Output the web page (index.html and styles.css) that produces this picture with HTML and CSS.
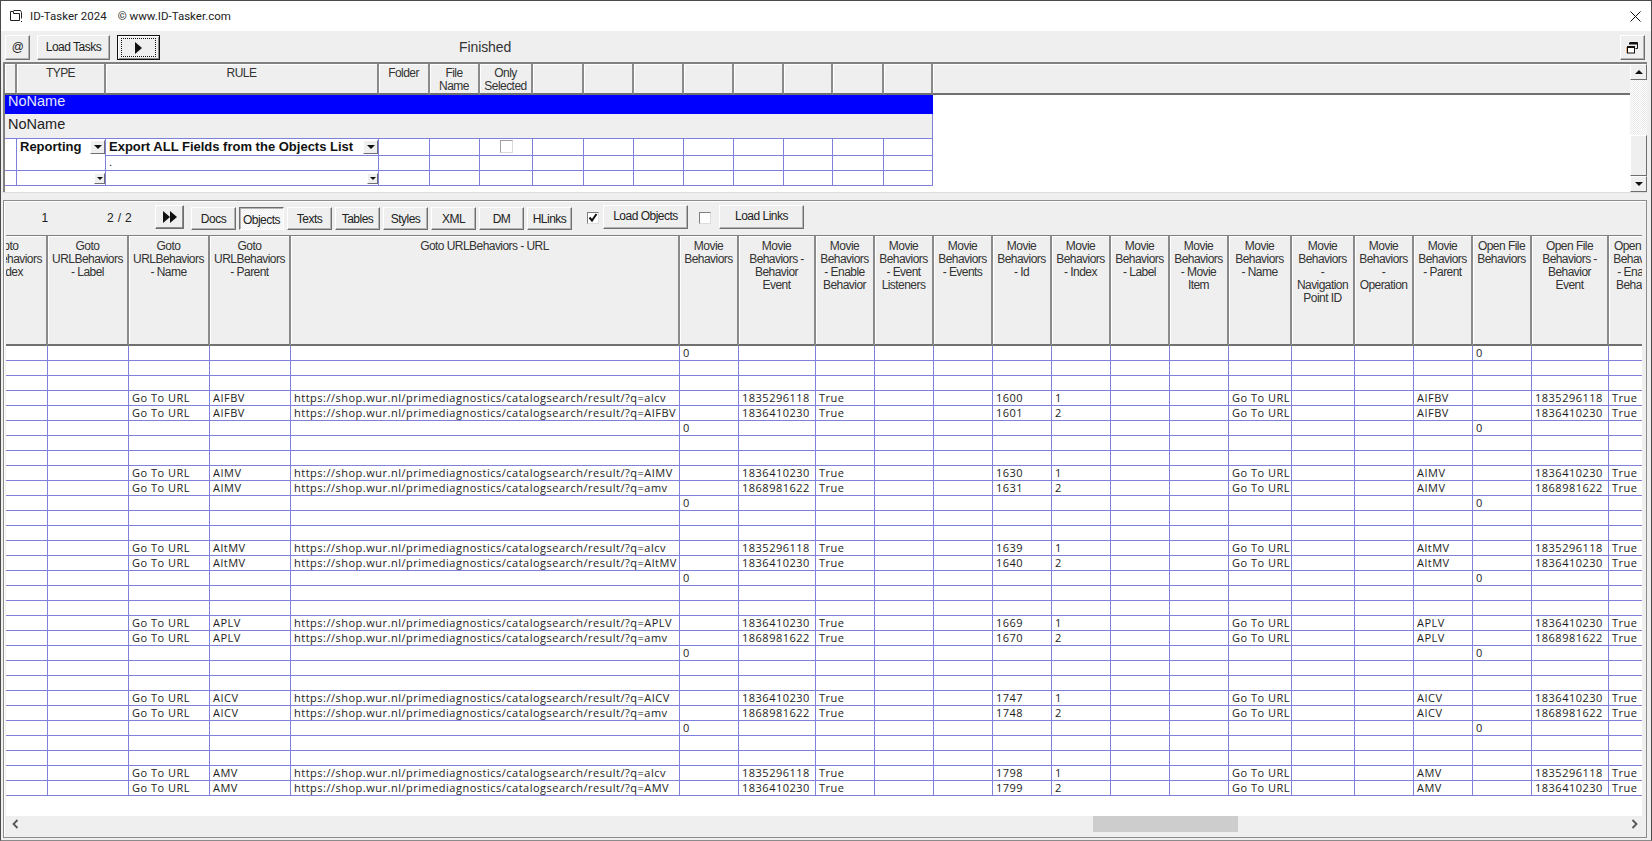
FILE: index.html
```html
<!DOCTYPE html>
<html lang="en">
<head>
<meta charset="utf-8">
<title>ID-Tasker 2024</title>
<link rel="stylesheet" href="styles.css">
</head>
<body>
<div class="app">
  <header class="titlebar">
    <svg class="appicon" width="14" height="14" viewBox="0 0 14 14"><path d="M1.500 2.500h3v2h6v7h-9zM4.500 1.500h7l1 2v6" fill="none" stroke="#222" stroke-width="1"/><path d="M12 12h1v1h-1z" fill="#222"/></svg>
    <span class="title">ID-Tasker 2024</span>
    <span class="title copy">© www.ID-Tasker.com</span>
    <svg class="close" width="11" height="11" viewBox="0 0 11 11"><path d="M.5.5l10 10M10.500.5l-10 10" stroke="#111" stroke-width="1"/></svg>
  </header>

  <div class="toolbar">
    <button class="btn at">@</button>
    <button class="btn loadtasks">Load Tasks</button>
    <button class="btn play"><span class="focus"><span class="tri-right"></span></span></button>
    <span class="status">Finished</span>
    <button class="btn restore">
      <svg width="13" height="12" viewBox="0 0 13 12"><path d="M3.500 .5h8v6h-2" fill="none" stroke="#111"/><path d="M3 1h9v1.500H3z" fill="#111"/><rect x="1.500" y="4.500" width="7" height="6.500" fill="#fff" stroke="#111"/><path d="M1 4h8v2H1z" fill="#111"/><path d="M0 5h1v6H0z" fill="#e8a878"/></svg>
    </button>
  </div>

  <section class="taskpanel">
    <div class="taskgrid">
      <table class="tasks">
        <colgroup><col class="c12"><col class="c89"><col class="c273"><col class="c51"><col class="c50"><col class="c53"><col class="c51"><col class="c50"><col class="c50"><col class="c50"><col class="c50"><col class="c49"><col class="c51"><col class="c49"><col></colgroup>
        <thead>
          <tr><th></th><th>TYPE</th><th>RULE</th><th>Folder</th><th>File<br>Name</th><th>Only<br>Selected</th><th></th><th></th><th></th><th></th><th></th><th></th><th></th><th></th><th class="fill"></th></tr>
        </thead>
        <tbody>
          <tr class="r-blue"><td colspan="14">NoName</td><td class="blank"></td></tr>
          <tr class="r-name"><td colspan="14">NoName</td><td class="blank"></td></tr>
          <tr class="r-main">
            <td rowspan="2"></td>
            <td rowspan="2" class="typecell"><div class="combo"><b>Reporting</b><span class="arrow big"><i class="tri-down"></i></span></div></td>
            <td><div class="combo"><b>Export ALL Fields from the Objects List</b><span class="arrow big"><i class="tri-down"></i></span></div></td>
            <td></td><td></td><td class="chk"><span class="check light"></span></td><td></td><td></td><td></td><td></td><td></td><td></td><td></td><td></td><td class="blank"></td>
          </tr>
          <tr class="r-sub"><td class="dot">.</td><td></td><td></td><td></td><td></td><td></td><td></td><td></td><td></td><td></td><td></td><td></td><td class="blank"></td></tr>
          <tr class="r-sub"><td></td><td><div class="combo end"><span class="arrow"><i class="tri-down small"></i></span></div></td><td><div class="combo end"><span class="arrow"><i class="tri-down small"></i></span></div></td><td></td><td></td><td></td><td></td><td></td><td></td><td></td><td></td><td></td><td></td><td></td><td class="blank"></td></tr>
        </tbody>
      </table>
    </div>
    <div class="vscroll">
      <span class="vbtn"><i class="tri-up"></i></span>
      <span class="vtrack"></span>
      <span class="vthumb"></span>
      <span class="vbtn"><i class="tri-down"></i></span>
    </div>
  </section>

  <section class="objpanel">
    <div class="objbar">
      <span class="count n1">1</span>
      <span class="count n2">2 / 2</span>
      <button class="btn next"><span class="tri-right"></span><span class="tri-right"></span></button>
      <div class="tabs">
        <button class="btn tab">Docs</button>
        <button class="btn tab on">Objects</button>
        <button class="btn tab">Texts</button>
        <button class="btn tab">Tables</button>
        <button class="btn tab">Styles</button>
        <button class="btn tab">XML</button>
        <button class="btn tab">DM</button>
        <button class="btn tab">HLinks</button>
      </div>
      <span class="check first"><svg width="10" height="10" viewBox="0 0 10 10"><path d="M1.500 4.500l2.500 3 4.500-6.500" fill="none" stroke="#111" stroke-width="2"/></svg></span>
      <button class="btn load up">Load Objects</button>
      <span class="check second"></span>
      <button class="btn load up">Load Links</button>
    </div>
    <div class="objgrid">
      <table class="objects">
        <colgroup><col class="c81"><col class="c81"><col class="c81"><col class="c81"><col class="c389"><col class="c59"><col class="c77"><col class="c59"><col class="c59"><col class="c59"><col class="c59"><col class="c59"><col class="c59"><col class="c59"><col class="c63"><col class="c63"><col class="c59"><col class="c59"><col class="c59"><col class="c77"><col class="c59"></colgroup>
        <thead>
          <tr>
            <th>Goto<br>URLBehaviors<br>- Index</th>
            <th>Goto<br>URLBehaviors<br>- Label</th>
            <th>Goto<br>URLBehaviors<br>- Name</th>
            <th>Goto<br>URLBehaviors<br>- Parent</th>
            <th>Goto URLBehaviors - URL</th>
            <th>Movie<br>Behaviors</th>
            <th>Movie<br>Behaviors -<br>Behavior<br>Event</th>
            <th>Movie<br>Behaviors<br>- Enable<br>Behavior</th>
            <th>Movie<br>Behaviors<br>- Event<br>Listeners</th>
            <th>Movie<br>Behaviors<br>- Events</th>
            <th>Movie<br>Behaviors<br>- Id</th>
            <th>Movie<br>Behaviors<br>- Index</th>
            <th>Movie<br>Behaviors<br>- Label</th>
            <th>Movie<br>Behaviors<br>- Movie<br>Item</th>
            <th>Movie<br>Behaviors<br>- Name</th>
            <th>Movie<br>Behaviors<br>-<br>Navigation<br>Point ID</th>
            <th>Movie<br>Behaviors<br>-<br>Operation</th>
            <th>Movie<br>Behaviors<br>- Parent</th>
            <th>Open File<br>Behaviors</th>
            <th>Open File<br>Behaviors -<br>Behavior<br>Event</th>
            <th>Open File<br>Behaviors<br>- Enable<br>Behavior</th>
          </tr>
        </thead>
        <tbody>
          <tr><td></td><td></td><td></td><td></td><td></td><td>0</td><td></td><td></td><td></td><td></td><td></td><td></td><td></td><td></td><td></td><td></td><td></td><td></td><td>0</td><td></td><td></td></tr>
          <tr><td></td><td></td><td></td><td></td><td></td><td></td><td></td><td></td><td></td><td></td><td></td><td></td><td></td><td></td><td></td><td></td><td></td><td></td><td></td><td></td><td></td></tr>
          <tr><td></td><td></td><td></td><td></td><td></td><td></td><td></td><td></td><td></td><td></td><td></td><td></td><td></td><td></td><td></td><td></td><td></td><td></td><td></td><td></td><td></td></tr>
          <tr><td></td><td></td><td>Go To URL</td><td>AIFBV</td><td>https://shop.wur.nl/primediagnostics/catalogsearch/result/?q=alcv</td><td></td><td>1835296118</td><td>True</td><td></td><td></td><td>1600</td><td>1</td><td></td><td></td><td>Go To URL</td><td></td><td></td><td>AIFBV</td><td></td><td>1835296118</td><td>True</td></tr>
          <tr><td></td><td></td><td>Go To URL</td><td>AIFBV</td><td>https://shop.wur.nl/primediagnostics/catalogsearch/result/?q=AIFBV</td><td></td><td>1836410230</td><td>True</td><td></td><td></td><td>1601</td><td>2</td><td></td><td></td><td>Go To URL</td><td></td><td></td><td>AIFBV</td><td></td><td>1836410230</td><td>True</td></tr>
          <tr><td></td><td></td><td></td><td></td><td></td><td>0</td><td></td><td></td><td></td><td></td><td></td><td></td><td></td><td></td><td></td><td></td><td></td><td></td><td>0</td><td></td><td></td></tr>
          <tr><td></td><td></td><td></td><td></td><td></td><td></td><td></td><td></td><td></td><td></td><td></td><td></td><td></td><td></td><td></td><td></td><td></td><td></td><td></td><td></td><td></td></tr>
          <tr><td></td><td></td><td></td><td></td><td></td><td></td><td></td><td></td><td></td><td></td><td></td><td></td><td></td><td></td><td></td><td></td><td></td><td></td><td></td><td></td><td></td></tr>
          <tr><td></td><td></td><td>Go To URL</td><td>AIMV</td><td>https://shop.wur.nl/primediagnostics/catalogsearch/result/?q=AIMV</td><td></td><td>1836410230</td><td>True</td><td></td><td></td><td>1630</td><td>1</td><td></td><td></td><td>Go To URL</td><td></td><td></td><td>AIMV</td><td></td><td>1836410230</td><td>True</td></tr>
          <tr><td></td><td></td><td>Go To URL</td><td>AIMV</td><td>https://shop.wur.nl/primediagnostics/catalogsearch/result/?q=amv</td><td></td><td>1868981622</td><td>True</td><td></td><td></td><td>1631</td><td>2</td><td></td><td></td><td>Go To URL</td><td></td><td></td><td>AIMV</td><td></td><td>1868981622</td><td>True</td></tr>
          <tr><td></td><td></td><td></td><td></td><td></td><td>0</td><td></td><td></td><td></td><td></td><td></td><td></td><td></td><td></td><td></td><td></td><td></td><td></td><td>0</td><td></td><td></td></tr>
          <tr><td></td><td></td><td></td><td></td><td></td><td></td><td></td><td></td><td></td><td></td><td></td><td></td><td></td><td></td><td></td><td></td><td></td><td></td><td></td><td></td><td></td></tr>
          <tr><td></td><td></td><td></td><td></td><td></td><td></td><td></td><td></td><td></td><td></td><td></td><td></td><td></td><td></td><td></td><td></td><td></td><td></td><td></td><td></td><td></td></tr>
          <tr><td></td><td></td><td>Go To URL</td><td>AltMV</td><td>https://shop.wur.nl/primediagnostics/catalogsearch/result/?q=alcv</td><td></td><td>1835296118</td><td>True</td><td></td><td></td><td>1639</td><td>1</td><td></td><td></td><td>Go To URL</td><td></td><td></td><td>AltMV</td><td></td><td>1835296118</td><td>True</td></tr>
          <tr><td></td><td></td><td>Go To URL</td><td>AltMV</td><td>https://shop.wur.nl/primediagnostics/catalogsearch/result/?q=AltMV</td><td></td><td>1836410230</td><td>True</td><td></td><td></td><td>1640</td><td>2</td><td></td><td></td><td>Go To URL</td><td></td><td></td><td>AltMV</td><td></td><td>1836410230</td><td>True</td></tr>
          <tr><td></td><td></td><td></td><td></td><td></td><td>0</td><td></td><td></td><td></td><td></td><td></td><td></td><td></td><td></td><td></td><td></td><td></td><td></td><td>0</td><td></td><td></td></tr>
          <tr><td></td><td></td><td></td><td></td><td></td><td></td><td></td><td></td><td></td><td></td><td></td><td></td><td></td><td></td><td></td><td></td><td></td><td></td><td></td><td></td><td></td></tr>
          <tr><td></td><td></td><td></td><td></td><td></td><td></td><td></td><td></td><td></td><td></td><td></td><td></td><td></td><td></td><td></td><td></td><td></td><td></td><td></td><td></td><td></td></tr>
          <tr><td></td><td></td><td>Go To URL</td><td>APLV</td><td>https://shop.wur.nl/primediagnostics/catalogsearch/result/?q=APLV</td><td></td><td>1836410230</td><td>True</td><td></td><td></td><td>1669</td><td>1</td><td></td><td></td><td>Go To URL</td><td></td><td></td><td>APLV</td><td></td><td>1836410230</td><td>True</td></tr>
          <tr><td></td><td></td><td>Go To URL</td><td>APLV</td><td>https://shop.wur.nl/primediagnostics/catalogsearch/result/?q=amv</td><td></td><td>1868981622</td><td>True</td><td></td><td></td><td>1670</td><td>2</td><td></td><td></td><td>Go To URL</td><td></td><td></td><td>APLV</td><td></td><td>1868981622</td><td>True</td></tr>
          <tr><td></td><td></td><td></td><td></td><td></td><td>0</td><td></td><td></td><td></td><td></td><td></td><td></td><td></td><td></td><td></td><td></td><td></td><td></td><td>0</td><td></td><td></td></tr>
          <tr><td></td><td></td><td></td><td></td><td></td><td></td><td></td><td></td><td></td><td></td><td></td><td></td><td></td><td></td><td></td><td></td><td></td><td></td><td></td><td></td><td></td></tr>
          <tr><td></td><td></td><td></td><td></td><td></td><td></td><td></td><td></td><td></td><td></td><td></td><td></td><td></td><td></td><td></td><td></td><td></td><td></td><td></td><td></td><td></td></tr>
          <tr><td></td><td></td><td>Go To URL</td><td>AICV</td><td>https://shop.wur.nl/primediagnostics/catalogsearch/result/?q=AICV</td><td></td><td>1836410230</td><td>True</td><td></td><td></td><td>1747</td><td>1</td><td></td><td></td><td>Go To URL</td><td></td><td></td><td>AICV</td><td></td><td>1836410230</td><td>True</td></tr>
          <tr><td></td><td></td><td>Go To URL</td><td>AICV</td><td>https://shop.wur.nl/primediagnostics/catalogsearch/result/?q=amv</td><td></td><td>1868981622</td><td>True</td><td></td><td></td><td>1748</td><td>2</td><td></td><td></td><td>Go To URL</td><td></td><td></td><td>AICV</td><td></td><td>1868981622</td><td>True</td></tr>
          <tr><td></td><td></td><td></td><td></td><td></td><td>0</td><td></td><td></td><td></td><td></td><td></td><td></td><td></td><td></td><td></td><td></td><td></td><td></td><td>0</td><td></td><td></td></tr>
          <tr><td></td><td></td><td></td><td></td><td></td><td></td><td></td><td></td><td></td><td></td><td></td><td></td><td></td><td></td><td></td><td></td><td></td><td></td><td></td><td></td><td></td></tr>
          <tr><td></td><td></td><td></td><td></td><td></td><td></td><td></td><td></td><td></td><td></td><td></td><td></td><td></td><td></td><td></td><td></td><td></td><td></td><td></td><td></td><td></td></tr>
          <tr><td></td><td></td><td>Go To URL</td><td>AMV</td><td>https://shop.wur.nl/primediagnostics/catalogsearch/result/?q=alcv</td><td></td><td>1835296118</td><td>True</td><td></td><td></td><td>1798</td><td>1</td><td></td><td></td><td>Go To URL</td><td></td><td></td><td>AMV</td><td></td><td>1835296118</td><td>True</td></tr>
          <tr><td></td><td></td><td>Go To URL</td><td>AMV</td><td>https://shop.wur.nl/primediagnostics/catalogsearch/result/?q=AMV</td><td></td><td>1836410230</td><td>True</td><td></td><td></td><td>1799</td><td>2</td><td></td><td></td><td>Go To URL</td><td></td><td></td><td>AMV</td><td></td><td>1836410230</td><td>True</td></tr>
        </tbody>
      </table>
    </div>
    <div class="hscroll">
      <svg class="chev" width="7" height="10" viewBox="0 0 7 10"><path d="M5.500 1L1.500 5l4 4" fill="none" stroke="#555" stroke-width="1.800"/></svg>
      <span class="hthumb"></span>
      <svg class="chev" width="7" height="10" viewBox="0 0 7 10"><path d="M1.500 1l4 4-4 4" fill="none" stroke="#555" stroke-width="1.800"/></svg>
    </div>
  </section>
</div>
</body>
</html>
```
FILE: styles.css
```css
* { box-sizing: border-box; }
html, body { margin: 0; padding: 0; height: 100%; overflow: hidden; background: #efefef; }
body { font-family: "Liberation Sans", Arial, sans-serif; color: #111; }

.app { width: 1652px; height: 841px; display: flex; flex-direction: column; border: 1px solid #4a4a4a; border-bottom-color: #8a8a8a; }

.titlebar { height: 30px; flex: none; background: #fff; display: flex; align-items: center; padding: 0 10px 0 8px; }
.appicon { margin-right: 7px; }
.title { font-family: Roboto, sans-serif; font-size: 11.500px; color: #222; }
.copy { margin-left: 11px; }
.close { margin-left: auto; }

.btn { font-family: "Liberation Sans", Arial, sans-serif; font-size: 12px; letter-spacing: -.5px; color: #222; background: #efefef; padding: 0 0 2px; border: 1px solid; border-color: #fff #6e6e6e #6e6e6e #fff; box-shadow: inset -1px -1px 0 #b4b4b4; display: inline-flex; align-items: center; justify-content: center; flex: none; }

.toolbar { height: 31px; flex: none; display: flex; align-items: flex-start; padding: 4px 6px 0 4px; }
.at { width: 25px; height: 25px; }
.loadtasks { width: 73px; height: 25px; margin-left: 7px; }
.play { width: 43px; height: 25px; margin-left: 7px; padding: 0; border: 1px solid #111; box-shadow: inset 1px 1px 0 #fff, inset -1px -1px 0 #8c8c8c; }
.focus { display: flex; align-items: center; justify-content: center; width: 35px; height: 19px; border: 1px dotted #111; }
.tri-right { display: block; width: 0; height: 0; border-left: 7px solid #111; border-top: 6px solid transparent; border-bottom: 6px solid transparent; }
.status { font-size: 14px; margin-left: 299px; margin-top: 4px; color: #333; letter-spacing: -.1px; }
.restore { width: 25px; height: 25px; margin-left: auto; padding: 0; }

.taskpanel { height: 131px; flex: none; margin: 0 4px 0 2px; display: flex; border-top: 2px solid #808080; border-bottom: 1px solid #dcdcdc; background: #fff; }
.taskgrid { flex: 1; min-width: 0; border-left: 2px solid #808080; overflow: hidden; }
table { border-collapse: separate; border-spacing: 0; table-layout: fixed; }
.tasks { width: 100%; }
.c12 { width: 12px; } .c89 { width: 89px; } .c273 { width: 273px; } .c49 { width: 49px; } .c50 { width: 50px; } .c51 { width: 51px; } .c53 { width: 53px; }
.c59 { width: 59px; } .c63 { width: 63px; } .c77 { width: 77px; } .c81 { width: 81px; } .c389 { width: 389px; }

th { background: #efefef; font-weight: 400; font-size: 12px; letter-spacing: -.55px; line-height: 13px; color: #333; vertical-align: top; text-align: center; padding: 4px 0 0; overflow: hidden; white-space: nowrap; border-right: 2px solid #8a8a8a; border-bottom: 2px solid #707070; box-shadow: inset 1px 1px 0 #fff; }
.tasks th { height: 31px; padding-top: 3px; }
.tasks th.fill { border-right: 0; }
.tasks td { border-right: 1px solid #7f7fdc; border-bottom: 1px solid #7f7fdc; padding: 0 0 0 2px; overflow: hidden; white-space: nowrap; }
.tasks td.blank { border: 0; }
.tasks .r-blue td { height: 19px; border: 0; padding-left: 3px; background: #0000ff; color: #e4e8ff; font-size: 14.500px; line-height: 12px; vertical-align: top; }
.tasks .r-blue td.blank, .tasks .r-name td.blank { background: #fff; }
.tasks .r-name td { height: 25px; background: #efefef; font-size: 14.500px; padding: 0 0 5px 3px; color: #222; }
.tasks .r-main td { height: 17px; }
.tasks .r-sub td { height: 15px; }
.tasks .typecell { vertical-align: top; }
.combo { display: flex; align-items: flex-start; justify-content: space-between; font-size: 13px; line-height: 16px; color: #111; padding-left: 1px; }
.combo.end { justify-content: flex-end; }
.arrow { width: 11px; height: 11px; margin: 1px 0 0; flex: none; background: #efefef; border: 1px solid; border-color: #fff #707070 #707070 #fff; display: flex; align-items: center; justify-content: center; }
.arrow.big { width: 15px; height: 14px; margin-top: 1px; }
.tri-down { display: block; width: 0; height: 0; border-top: 4px solid #111; border-left: 4px solid transparent; border-right: 4px solid transparent; }
.tri-down.small { border-top-width: 3px; border-left-width: 3px; border-right-width: 3px; }
.tri-up { display: block; width: 0; height: 0; border-bottom: 4px solid #111; border-left: 4px solid transparent; border-right: 4px solid transparent; }
.tasks td.dot { font-size: 11px; line-height: 12px; color: #223; padding-left: 3px; vertical-align: top; }
.tasks td.chk { text-align: center; padding: 0; font-size: 0; line-height: 0; vertical-align: top; }
.check { display: inline-flex; align-items: center; justify-content: center; width: 12px; height: 12px; background: #fff; border: 1px solid; border-color: #808080 #ddd #ddd #808080; flex: none; }
.check.light { width: 13px; height: 13px; border-color: #a0a0a0 #dadada #dadada #a0a0a0; vertical-align: top; margin-top: 1px; }

.vscroll { width: 17px; flex: none; display: flex; flex-direction: column; }
.vbtn { height: 16px; flex: none; background: #efefef; border: 1px solid; border-color: #fff #6e6e6e #6e6e6e #fff; display: flex; align-items: center; justify-content: center; }
.vtrack { height: 55px; flex: none; background: repeating-conic-gradient(#fff 0 25%, #e9e9e9 0 50%) 0 0 / 2px 2px; }
.vthumb { flex: 1; background: #efefef; border: 1px solid; border-color: #fff #6e6e6e #6e6e6e #fff; }

.objpanel { flex: 1; min-height: 0; margin: 7px 4px 2px 2px; display: flex; flex-direction: column; border: 1px solid #8c8c8c; padding: 0 4px 5px 2px; box-shadow: inset 1px 1px 0 #fff; }
.objbar { height: 34px; flex: none; display: flex; align-items: flex-start; }
.count { font-size: 12px; letter-spacing: .3px; text-align: center; color: #222; margin-top: 10px; flex: none; }
.n1 { width: 78px; }
.n2 { width: 71px; }
.next { width: 29px; height: 24px; margin-top: 4px; padding: 0; box-shadow: inset -1px -1px 0 #8c8c8c; }
.tabs { display: flex; gap: 3px; margin-left: 7px; margin-top: 6px; }
.tab { width: 45px; height: 23px; padding: 0; }
.tab.on { background: repeating-conic-gradient(#fff 0 25%, #efefef 0 50%) 0 0 / 2px 2px; border-color: #6e6e6e #fff #fff #6e6e6e; box-shadow: inset 1px 1px 0 #b4b4b4; padding-top: 2px; }
.first { margin: 11px 0 0 15px; }
.second { margin: 11px 0 0 11px; }
.load { width: 85px; height: 24px; margin: 4px 0 0 4px; }
.second + .load { margin-left: 8px; }

.objgrid { flex: 1; min-height: 0; overflow: hidden; background: #fff; border-top: 1px solid #808080; }
.objects { width: 1701px; margin-left: -39px; }
.objects th { height: 110px; }
.objects td { height: 15px; padding: 0 0 0 3px; font-family: "Open Sans", sans-serif; font-size: 11px; letter-spacing: .5px; line-height: 14px; color: #1c1c1c; border-right: 1px solid #7f7fdc; border-bottom: 1px solid #7f7fdc; overflow: hidden; white-space: nowrap; }

.hscroll { height: 16px; flex: none; background: #efefef; display: flex; align-items: center; justify-content: space-between; padding: 0 4px 0 6px; position: relative; }
.hthumb { position: absolute; left: 1087px; top: 0; width: 145px; height: 16px; background: #cdcdcd; }
```
